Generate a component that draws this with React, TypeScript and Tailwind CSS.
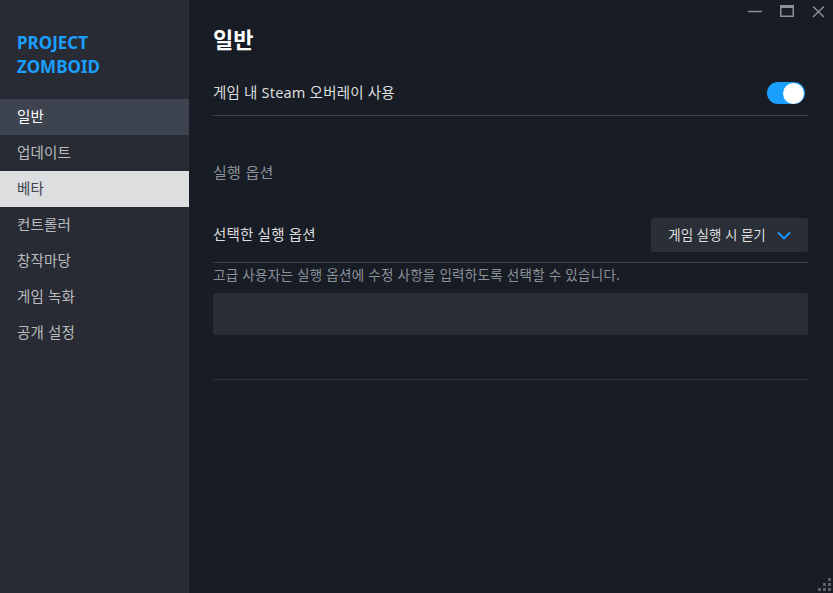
const navItems = ["일반", "업데이트", "베타", "컨트롤러", "창작마당", "게임 녹화", "공개 설정"];

function WindowControls() {
  return (
    <div className="absolute top-0 right-0 flex items-center h-[22px] pr-[8px] gap-[18px] text-[#8b929a]">
      <svg width="14" height="14" viewBox="0 0 14 14">
        <path d="M0 7.5h14" stroke="currentColor" strokeWidth="1.5" />
      </svg>
      <svg width="14" height="14" viewBox="0 0 14 14">
        <rect x="0.75" y="1.75" width="12.5" height="10.5" fill="none" stroke="currentColor" strokeWidth="1.5" />
        <path d="M0.75 3h12.5" stroke="currentColor" strokeWidth="2" />
      </svg>
      <svg width="13" height="13" viewBox="0 0 13 13">
        <path d="M1 1.5l11 10.5M12 1.5l-11 10.5" stroke="currentColor" strokeWidth="1.4" />
      </svg>
    </div>
  );
}

function ResizeGrip() {
  return (
    <div className="absolute right-[2px] bottom-[2px] grid grid-cols-3 gap-[2px]">
      {[0, 0, 1, 0, 1, 1, 1, 1, 1].map((v, i) => (
        <span key={i} className={v ? "w-[3px] h-[3px] bg-[#5c626b]" : "w-[3px] h-[3px]"} />
      ))}
    </div>
  );
}

export default function App() {
  return (
    <div
      className="relative flex w-[833px] h-[593px] overflow-hidden bg-[#181c24]"
      style={{ fontFamily: '"Noto Sans", "Noto Sans CJK KR", sans-serif' }}
    >
      <aside className="w-[189px] shrink-0 bg-[#282b33] flex flex-col">
        <div className="pt-[31px] pb-[20px] pl-[17px] text-[17px] leading-[24px] font-bold text-[#1a9fff]">
          <div>PROJECT</div>
          <div>ZOMBOID</div>
        </div>
        <nav className="flex flex-col">
          {navItems.map((item, i) => (
            <div
              key={item}
              className={
                "h-[36px] flex items-center pl-[17px] text-[14.5px] tracking-[0.2px] " +
                (i === 0
                  ? "bg-[#3d4450] text-white"
                  : i === 2
                  ? "bg-[#dcdedf] text-[#3d4450]"
                  : "text-[#b8bcbf]")
              }
            >
              {item}
            </div>
          ))}
        </nav>
      </aside>

      <main className="flex-1 pl-[24px] pr-[25px] pt-[23px]">
        <h1 className="text-[22px] leading-[32px] font-bold text-white">일반</h1>

        <div className="mt-[22px] h-[39px] flex items-center justify-between border-b border-[#3a3d45]">
          <span className="text-[14.5px] tracking-[0.2px] text-[#dcdedf] -mt-[6px]">게임 내 Steam 오버레이 사용</span>
          <div className="-mt-[6px] mr-[3px] w-[38px] h-[22px] rounded-full bg-[#1a9fff] flex items-center justify-end pr-[1px]">
            <span className="w-[21px] h-[21px] rounded-full bg-white" />
          </div>
        </div>

        <div className="mt-[46px] text-[15px] leading-[20px] tracking-[0.3px] text-[#8b929a]">실행 옵션</div>

        <div className="mt-[36px] h-[45px] flex items-start justify-between border-b border-[#3a3d45]">
          <span className="mt-[6px] text-[14.5px] tracking-[0.2px] text-[#dcdedf]">선택한 실행 옵션</span>
          <div className="h-[34px] w-[157px] rounded-[3px] bg-[#2a2e36] flex items-center justify-center gap-[11px] text-[13.5px] text-[#dcdedf]">
            <span>게임 실행 시 묻기</span>
            <svg width="14" height="9" viewBox="0 0 14 9" className="text-[#1a9fff] mt-[1px]">
              <path d="M1 1.5l6 6 6-6" fill="none" stroke="currentColor" strokeWidth="1.8" />
            </svg>
          </div>
        </div>

        <p className="mt-[3px] text-[13.5px] leading-[19px] tracking-[0.3px] text-[#8b929a]">
          고급 사용자는 실행 옵션에 수정 사항을 입력하도록 선택할 수 있습니다.
        </p>

        <div className="mt-[8px] h-[42px] rounded-[3px] bg-[#2a2d35]" />

        <div className="mt-[44px] border-b border-[#2e3139]" />
      </main>

      <WindowControls />
      <ResizeGrip />
    </div>
  );
}
